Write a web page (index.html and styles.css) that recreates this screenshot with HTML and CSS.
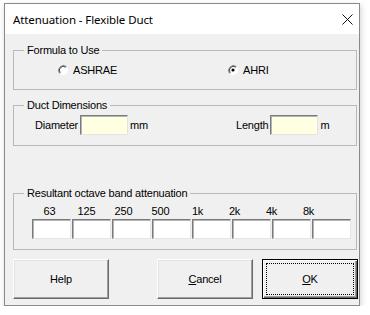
FILE: index.html
```html
<!DOCTYPE html>
<html lang="en">
<head>
    <meta charset="UTF-8">
    <title>Attenuation - Flexible Duct</title>
    <link rel="stylesheet" href="styles.css">
</head>
<body>
    <div class="window">
        <div class="titlebar">
            <span class="title">Attenuation - Flexible Duct</span>
            <svg class="close" width="11" height="11" viewBox="0 0 11 11">
                <path d="M0.5 0.5 L10.5 10.5 M10.5 0.5 L0.5 10.5" stroke="#111" stroke-width="1" fill="none"/>
            </svg>
        </div>

        <div class="dialog">
            <div class="group formula">
                <span class="caption">Formula to Use</span>
                <div class="radios">
                    <label class="radio">
                        <svg width="12" height="12" viewBox="0 0 12 12">
                            <circle cx="6" cy="6" r="5" fill="#fff"/>
                            <path d="M9.5 2.5 A5 5 0 0 0 2.5 9.5" stroke="#8a8a8a" fill="none"/>
                            <path d="M8.8 3.2 A4 4 0 0 0 3.2 8.8" stroke="#404040" fill="none"/>
                        </svg>
                        ASHRAE
                    </label>
                    <label class="radio ahri">
                        <svg width="12" height="12" viewBox="0 0 12 12">
                            <circle cx="6" cy="6" r="5" fill="#fff"/>
                            <path d="M9.5 2.5 A5 5 0 0 0 2.5 9.5" stroke="#8a8a8a" fill="none"/>
                            <path d="M8.8 3.2 A4 4 0 0 0 3.2 8.8" stroke="#404040" fill="none"/>
                            <circle cx="6" cy="6" r="1.6" fill="#000"/>
                        </svg>
                        AHRI
                    </label>
                </div>
            </div>

            <div class="group dimensions">
                <span class="caption">Duct Dimensions</span>
                <div class="fields">
                    <div class="field diameter">
                        <span>Diameter</span>
                        <input type="text" class="entry">
                        <span>mm</span>
                    </div>
                    <div class="field">
                        <span>Length</span>
                        <input type="text" class="entry">
                        <span>m</span>
                    </div>
                </div>
            </div>

            <div class="group bands">
                <span class="caption">Resultant octave band attenuation</span>
                <div class="band-labels">
                    <span>63</span>
                    <span>125</span>
                    <span>250</span>
                    <span>500</span>
                    <span>1k</span>
                    <span>2k</span>
                    <span>4k</span>
                    <span>8k</span>
                </div>
                <div class="band-boxes">
                    <input type="text" class="band">
                    <input type="text" class="band">
                    <input type="text" class="band">
                    <input type="text" class="band">
                    <input type="text" class="band">
                    <input type="text" class="band">
                    <input type="text" class="band">
                    <input type="text" class="band">
                </div>
            </div>

            <div class="actions">
                <button class="btn help">Help</button>
                <button class="btn cancel"><u>C</u>ancel</button>
                <button class="btn ok"><span class="focus"><u>O</u>K</span></button>
            </div>
        </div>
    </div>
</body>
</html>
```

FILE: styles.css
```css
* {
    margin: 0;
    padding: 0;
    box-sizing: border-box;
}

body {
    background: #fff;
    font-family: "Liberation Sans", Arial, sans-serif;
    font-size: 11px;
    letter-spacing: -0.2px;
    color: #000;
}

.window {
    margin: 3px 0 0 4px;
    width: 356px;
    height: 303px;
    border: 1px solid #8a8a8a;
    background: #f0f0f0;
    box-shadow: 1px 2px 6px rgba(0, 0, 0, 0.18);
}

.titlebar {
    height: 30px;
    background: #fff;
    display: flex;
    align-items: center;
    justify-content: space-between;
    padding: 0 6px 0 8px;
}

.title {
    font-family: "Noto Sans", "Open Sans", sans-serif;
    font-size: 11.5px;
    letter-spacing: -0.1px;
    color: #000;
    margin-top: 1px;
}

.close {
    display: block;
    margin-top: 1px;
}

.dialog {
    padding: 16px 0 0 8px;
}

.group {
    width: 344px;
    border: 1px solid #b9b9b9;
}

.caption {
    display: table;
    margin: -7px 0 0 10px;
    padding: 0 3px;
    line-height: 13px;
    background: #f0f0f0;
}

.formula {
    height: 40px;
}

.radios {
    display: flex;
    margin-top: 6px;
    padding-left: 43px;
}

.radio {
    display: flex;
    align-items: center;
    gap: 4px;
    height: 14px;
}

.radio svg {
    display: block;
}

.ahri {
    margin-left: 110px;
}

.dimensions {
    height: 41px;
    margin-top: 15px;
}

.fields {
    display: flex;
    margin-top: 3px;
    padding-left: 21px;
}

.field {
    display: flex;
    align-items: center;
    gap: 2px;
}

.diameter {
    width: 201px;
}

.entry {
    width: 48px;
    height: 20px;
    background: #ffffe1;
    border: 1px solid;
    border-color: #7a7a7a #e3e3e3 #e3e3e3 #7a7a7a;
    box-shadow: inset 1px 1px 0 #b4b4b4;
    outline: none;
}

.bands {
    height: 57px;
    margin-top: 47px;
}

.band-labels {
    display: flex;
    margin-top: 5px;
    padding-left: 17px;
    line-height: 13px;
}

.band-labels span {
    width: 37px;
    text-align: center;
}

.band-boxes {
    display: flex;
    gap: 1px;
    margin-top: 1px;
    padding-left: 18px;
}

.band {
    width: 39px;
    height: 20px;
    background: #fff;
    border: 1px solid;
    border-color: #7a7a7a #e3e3e3 #e3e3e3 #7a7a7a;
    box-shadow: inset 1px 1px 0 #b4b4b4;
    outline: none;
}

.actions {
    display: flex;
    margin-top: 9px;
}

.btn {
    width: 96px;
    height: 40px;
    font-family: "Liberation Sans", Arial, sans-serif;
    font-size: 11px;
    letter-spacing: -0.2px;
    color: #000;
    background: #f0f0f0;
    border: 1px solid;
    border-color: #fff #696969 #696969 #fff;
    box-shadow: inset -1px -1px 0 #a0a0a0, inset 1px 1px 0 #e3e3e3;
}

.cancel {
    margin-left: 48px;
}

.ok {
    margin-left: 9px;
    padding: 3px;
    border: 1px solid #000;
    box-shadow: inset 1px 1px 0 #fff, inset -1px -1px 0 #696969, inset -2px -2px 0 #a0a0a0;
}

.focus {
    display: flex;
    align-items: center;
    justify-content: center;
    height: 100%;
    border: 1px dotted #000;
}
```
